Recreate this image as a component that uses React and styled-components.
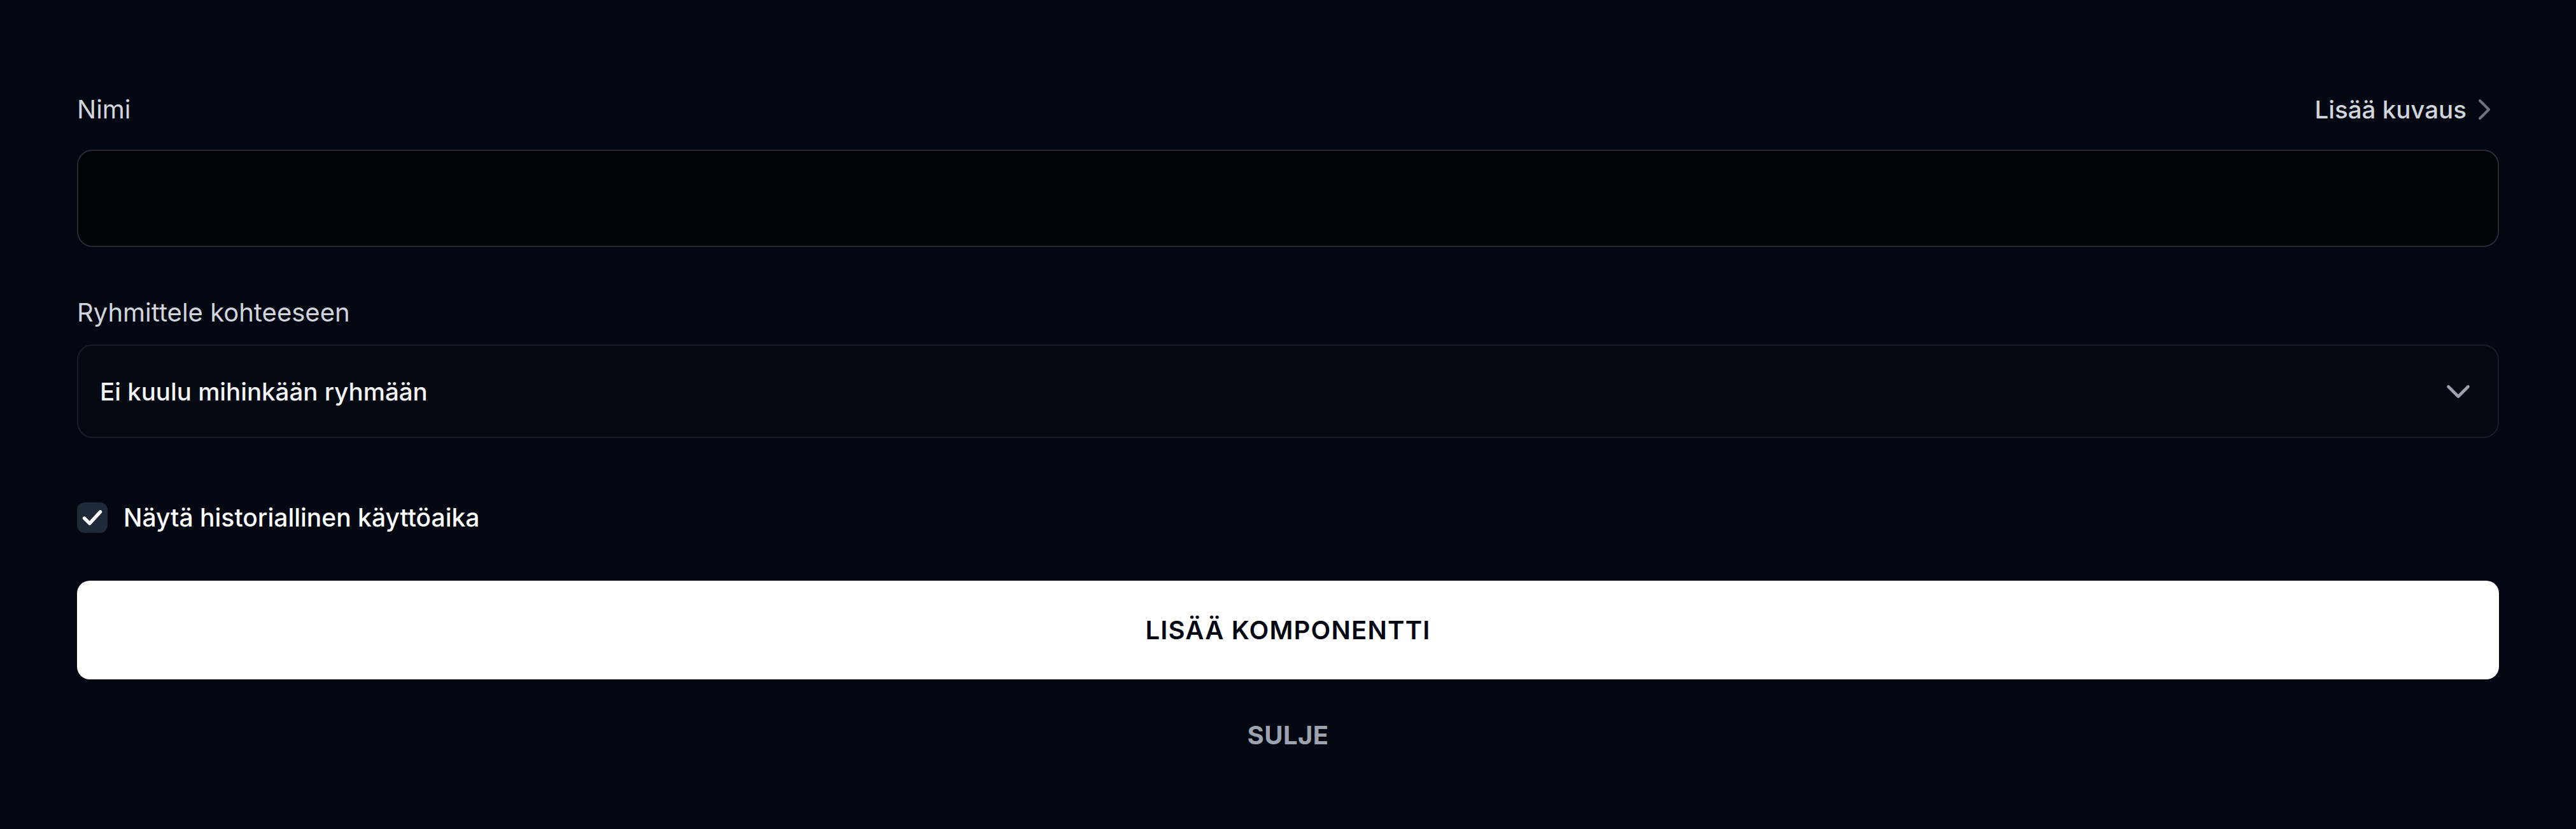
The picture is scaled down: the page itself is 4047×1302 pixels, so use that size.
import React from "react";
import styled, { createGlobalStyle } from "styled-components";

const Global = createGlobalStyle`
  html, body { margin: 0; padding: 0; background: #030712; }
  body { font-family: Inter, "Noto Sans", sans-serif; -webkit-font-smoothing: antialiased; }
  * { box-sizing: border-box; }
`;

const Page = styled.div`
  width: 4047px;
  height: 1302px;
  background: #030712;
  padding: 142px 121px 0;
  display: flex;
  flex-direction: column;
`;

const LabelRow = styled.div`
  display: flex;
  align-items: center;
  justify-content: space-between;
  height: 60px;
  margin-top: ${(p) => p.$mt || 0}px;
`;

const Label = styled.label`
  font-size: 40px;
  line-height: 60px;
  font-weight: 400;
  color: #d1d5db;
`;

const LinkButton = styled.button`
  display: flex;
  align-items: center;
  gap: 0;
  background: none;
  border: 0;
  padding: 0;
  font-family: inherit;
  font-size: 38.5px;
  line-height: 60px;
  font-weight: 500;
  color: #d1d5db;
  cursor: pointer;
  svg { color: #6b7280; margin-right: -5px; }
`;

const TextInput = styled.input`
  display: block;
  width: 100%;
  height: 153px;
  margin-top: ${(p) => p.$mt || 0}px;
  background: #010309;
  border: 2px solid #252b37;
  border-radius: 24px;
  padding: 0 34px;
  font-family: inherit;
  font-size: 40px;
  color: #f3f4f6;
  outline: none;
`;

const Select = styled.div`
  display: flex;
  align-items: center;
  justify-content: space-between;
  height: 147px;
  margin-top: ${(p) => p.$mt || 0}px;
  background: #050912;
  border: 2px solid #171d29;
  border-radius: 24px;
  padding: 0 31px 0 34px;
  svg { color: #9ca3af; }
`;

const SelectValue = styled.span`
  font-size: 38.5px;
  line-height: 60px;
  font-weight: 500;
  color: #f3f4f6;
`;

const CheckRow = styled.label`
  display: flex;
  align-items: center;
  gap: 25px;
  height: 60px;
  margin-top: ${(p) => p.$mt || 0}px;
  cursor: pointer;
`;

const Box = styled.span`
  width: 48px;
  height: 48px;
  border-radius: 12px;
  background: #1f2937;
  display: flex;
  align-items: center;
  justify-content: center;
  color: #ffffff;
`;

const CheckText = styled.span`
  font-size: 39px;
  line-height: 60px;
  font-weight: 500;
  color: #ffffff;
`;

const PrimaryButton = styled.button`
  display: flex;
  align-items: center;
  justify-content: center;
  width: 100%;
  height: 155px;
  margin-top: ${(p) => p.$mt || 0}px;
  background: #ffffff;
  border: 0;
  border-radius: 20px;
  font-family: inherit;
  font-size: 40px;
  font-weight: 600;
  letter-spacing: 0.03em;
  color: #030712;
  text-transform: uppercase;
  cursor: pointer;
`;

const GhostButton = styled.button`
  align-self: center;
  margin-top: ${(p) => p.$mt || 0}px;
  background: none;
  border: 0;
  padding: 0;
  font-family: inherit;
  font-size: 40px;
  line-height: 60px;
  font-weight: 700;
  letter-spacing: 0.01em;
  color: #9ca3af;
  text-transform: uppercase;
  cursor: pointer;
`;

const ChevronRight = () => (
  <svg width="56" height="56" viewBox="0 0 24 24" fill="none" stroke="currentColor" strokeWidth="1.8" strokeLinecap="round" strokeLinejoin="round">
    <path d="m9 18 6-6-6-6" />
  </svg>
);

const ChevronDown = () => (
  <svg width="62" height="62" viewBox="0 0 24 24" fill="none" stroke="currentColor" strokeWidth="1.8" strokeLinecap="round" strokeLinejoin="round">
    <path d="m6 9 6 6 6-6" />
  </svg>
);

const Check = () => (
  <svg width="40" height="40" viewBox="0 0 24 24" fill="none" stroke="currentColor" strokeWidth="3.2" strokeLinecap="round" strokeLinejoin="round">
    <path d="M4.5 12.5 9.5 17.5 19.5 6.5" />
  </svg>
);

export default function App() {
  return (
    <>
      <Global />
      <Page>
        <LabelRow>
          <Label htmlFor="nimi">Nimi</Label>
          <LinkButton type="button">
            Lisää kuvaus
            <ChevronRight />
          </LinkButton>
        </LabelRow>
        <TextInput id="nimi" $mt={33} />
        <LabelRow $mt={73}>
          <Label>Ryhmittele kohteeseen</Label>
        </LabelRow>
        <Select $mt={20}>
          <SelectValue>Ei kuulu mihinkään ryhmään</SelectValue>
          <ChevronDown />
        </Select>
        <CheckRow $mt={95}>
          <Box>
            <Check />
          </Box>
          <CheckText>Näytä historiallinen käyttöaika</CheckText>
        </CheckRow>
        <PrimaryButton $mt={69}>Lisää komponentti</PrimaryButton>
        <GhostButton $mt={58}>Sulje</GhostButton>
      </Page>
    </>
  );
}
